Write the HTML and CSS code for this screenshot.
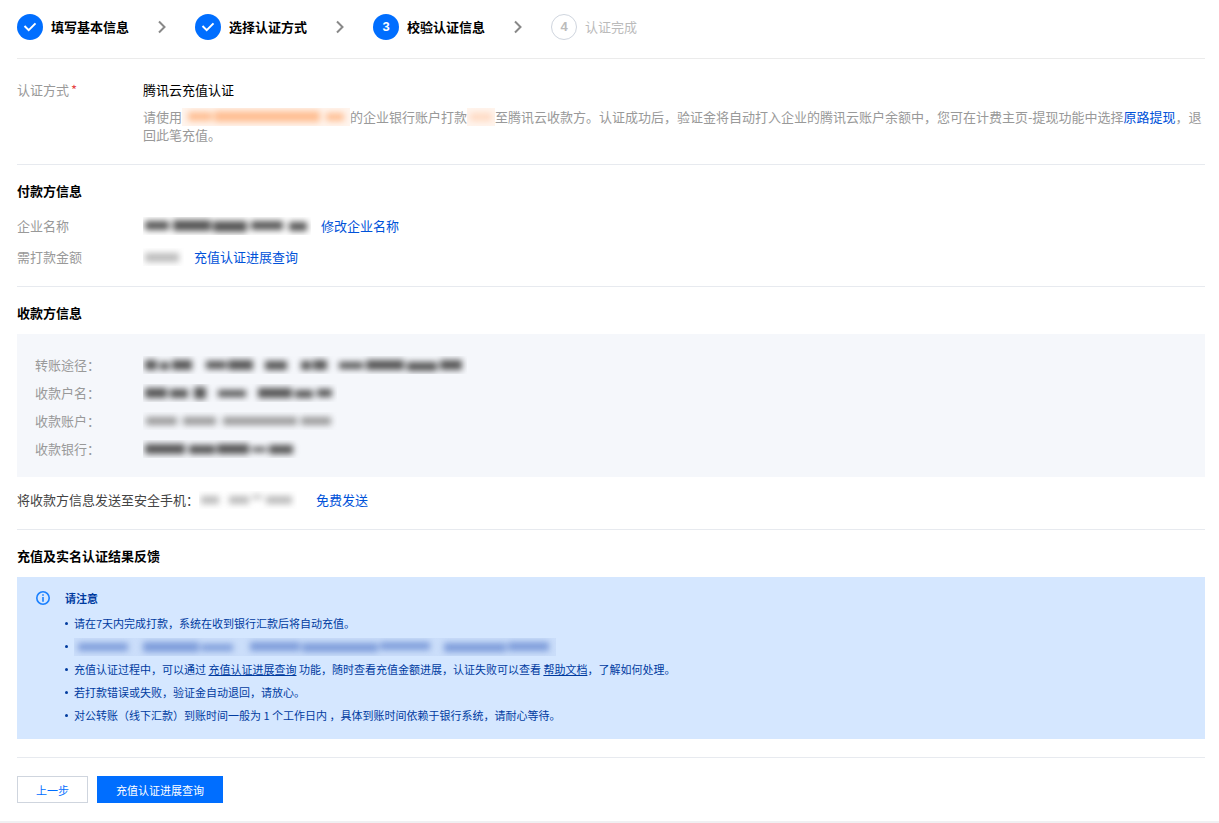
FILE: index.html
```html
<!DOCTYPE html>
<html lang="zh-CN">

<head>
    <meta charset="UTF-8">
    <meta name="viewport" content="width=device-width, initial-scale=1.0">
    <title>校验认证信息</title>
    <link rel="stylesheet" href="styles.css">
</head>

<body>
    <main class="page">
        <!-- 步骤条 -->
        <ol class="steps">
            <li class="step done">
                <span class="step-icon"><svg width="26" height="26" viewBox="0 0 26 26"><path d="M7.5 12l4.2 4.2 6.8-6.8" /></svg></span>
                <span>填写基本信息</span>
            </li>
            <li class="step-arrow"><svg width="8" height="14" viewBox="0 0 8 14"><path d="M1 1.5L6.5 7 1 12.500" /></svg></li>
            <li class="step done">
                <span class="step-icon"><svg width="26" height="26" viewBox="0 0 26 26"><path d="M7.5 12l4.2 4.2 6.8-6.8" /></svg></span>
                <span>选择认证方式</span>
            </li>
            <li class="step-arrow"><svg width="8" height="14" viewBox="0 0 8 14"><path d="M1 1.5L6.5 7 1 12.500" /></svg></li>
            <li class="step current">
                <span class="step-icon">3</span>
                <span>校验认证信息</span>
            </li>
            <li class="step-arrow"><svg width="8" height="14" viewBox="0 0 8 14"><path d="M1 1.5L6.5 7 1 12.500" /></svg></li>
            <li class="step">
                <span class="step-icon">4</span>
                <span>认证完成</span>
            </li>
        </ol>

        <!-- 认证方式 -->
        <section class="section section-method">
            <div class="row">
                <span class="label">认证方式<span class="required">*</span></span>
                <div class="value">
                    <p class="method">腾讯云充值认证</p>
                    <p class="desc">请使用<svg class="mask mask-orange" width="168" height="18"><g><rect x="6" y="4" width="24" height="9" /><rect x="32" y="3" width="106" height="11" /><rect x="144" y="5" width="18" height="8" /></g></svg>的企业银行账户打款<svg class="mask mask-orange light" width="28" height="18"><g><rect x="3" y="5" width="22" height="8" /></g></svg>至腾讯云收款方。认证成功后，验证金将自动打入企业的腾讯云账户余额中，您可在计费主页-提现功能中选择<a href="#">原路提现</a>，退回此笔充值。</p>
                </div>
            </div>
        </section>

        <!-- 付款方 -->
        <section class="section">
            <h2 class="title">付款方信息</h2>
            <div class="rows">
                <div class="row">
                    <span class="label">企业名称</span>
                    <svg class="mask" width="168" height="18"><g><rect x="2" y="4" width="24" height="9" /><rect x="30" y="3" width="38" height="11" /><rect x="70" y="4" width="34" height="11" /><rect x="108" y="4" width="32" height="9" /><rect x="146" y="5" width="18" height="9" /></g></svg>
                    <a class="row-link" href="#">修改企业名称</a>
                </div>
                <div class="row">
                    <span class="label">需打款金额</span>
                    <svg class="mask light" width="41" height="18"><g><rect x="2" y="5" width="34" height="9" /></g></svg>
                    <a class="row-link" href="#">充值认证进展查询</a>
                </div>
            </div>
        </section>

        <!-- 收款方 -->
        <section class="section">
            <h2 class="title">收款方信息</h2>
            <div class="account">
                <div class="account-row">
                    <span class="label">转账途径：</span>
                    <svg class="mask" width="324" height="18"><g><rect x="2" y="4" width="12" height="10" /><rect x="17" y="6" width="9" height="8" /><rect x="29" y="4" width="20" height="10" /><rect x="63" y="5" width="20" height="8" /><rect x="85" y="4" width="25" height="10" /><rect x="122" y="5" width="22" height="9" /><rect x="158" y="5" width="10" height="9" /><rect x="170" y="4" width="14" height="10" /><rect x="196" y="6" width="24" height="7" /><rect x="223" y="4" width="38" height="10" /><rect x="264" y="6" width="30" height="9" /><rect x="297" y="4" width="22" height="10" /></g></svg>
                </div>
                <div class="account-row">
                    <span class="label">收款户名：</span>
                    <svg class="mask" width="194" height="18"><g><rect x="2" y="4" width="22" height="10" /><rect x="27" y="5" width="18" height="9" /><rect x="51" y="3" width="12" height="12" /><rect x="75" y="6" width="28" height="7" /><rect x="115" y="4" width="34" height="10" /><rect x="152" y="6" width="18" height="8" /><rect x="174" y="5" width="15" height="8" /></g></svg>
                </div>
                <div class="account-row">
                    <span class="label">收款账户：</span>
                    <svg class="mask soft" width="194" height="18"><g><rect x="3" y="5" width="31" height="8" /><rect x="40" y="5" width="33" height="8" /><rect x="80" y="5" width="74" height="8" /><rect x="158" y="5" width="30" height="8" /></g></svg>
                </div>
                <div class="account-row">
                    <span class="label">收款银行：</span>
                    <svg class="mask" width="158" height="18"><g><rect x="2" y="4" width="40" height="10" /><rect x="46" y="5" width="26" height="9" /><rect x="74" y="4" width="32" height="10" /><rect x="109" y="7" width="14" height="5" /><rect x="126" y="5" width="24" height="9" /></g></svg>
                </div>
            </div>
            <div class="phone">
                <span>将收款方信息发送至安全手机：</span>
                <svg class="mask light" width="98" height="18"><g><rect x="2" y="5" width="18" height="8" /><rect x="30" y="5" width="20" height="8" /><rect x="53" y="4" width="10" height="4" /><rect x="67" y="5" width="26" height="8" /></g></svg>
                <a class="send" href="#">免费发送</a>
            </div>
        </section>

        <!-- 结果反馈 -->
        <section class="section section-result">
            <h2 class="title">充值及实名认证结果反馈</h2>
            <div class="notice">
                <svg class="notice-icon" width="14" height="14" viewBox="0 0 14 14"><circle cx="7" cy="7" r="6.200" /><path d="M7 3.300v1.500M7 6v4.700" /></svg>
                <div>
                    <h3 class="notice-title">请注意</h3>
                    <ul class="notice-list">
                        <li>请在7天内完成打款，系统在收到银行汇款后将自动充值。</li>
                        <li><svg class="mask mask-blue" width="482" height="18"><g><rect x="4" y="5" width="50" height="8" /><rect x="69" y="4" width="56" height="10" /><rect x="127" y="6" width="32" height="7" /><rect x="176" y="4" width="50" height="9" /><rect x="228" y="5" width="76" height="9" /><rect x="306" y="4" width="50" height="8" /><rect x="370" y="5" width="62" height="9" /><rect x="434" y="4" width="41" height="9" /></g></svg></li>
                        <li>充值认证过程中，可以通过 <a href="#">充值认证进展查询</a> 功能，随时查看充值金额进展，认证失败可以查看 <a href="#">帮助文档</a>，了解如何处理。</li>
                        <li>若打款错误或失败，验证金自动退回，请放心。</li>
                        <li>对公转账（线下汇款）到账时间一般为 1 个工作日内 ，具体到账时间依赖于银行系统，请耐心等待。</li>
                    </ul>
                </div>
            </div>
        </section>

        <div class="actions">
            <button type="button" class="btn">上一步</button>
            <button type="button" class="btn btn-primary">充值认证进展查询</button>
        </div>
    </main>
</body>

</html>
```
FILE: styles.css
```css
* {
    box-sizing: border-box;
    margin: 0;
    padding: 0;
}

body {
    background: #fff;
    color: #000;
    font: 13px/18px "Noto Sans CJK SC", sans-serif;
}

a {
    color: #0052d9;
    text-decoration: none;
}

svg {
    display: block;
    fill: none;
}

.page {
    padding: 0 14px 18px 17px;
    border-bottom: 2px solid #f0f0f2;
}

/* 步骤条 */
.steps {
    display: flex;
    align-items: center;
    gap: 29px;
    padding: 14px 0 18px;
    border-bottom: 1px solid #ebebeb;
    list-style: none;
}

.step {
    display: flex;
    align-items: center;
    gap: 8px;
    color: #bbb;
}

.step-icon {
    width: 26px;
    height: 26px;
    border: 1px solid #cfd5de;
    border-radius: 50%;
    line-height: 24px;
    text-align: center;
    font-family: "Liberation Sans", sans-serif;
    font-weight: bold;
}

.step.done,
.step.current {
    color: #000;
    font-weight: bold;
}

.step.done .step-icon,
.step.current .step-icon {
    border: 0;
    background: #006eff;
    color: #fff;
    line-height: 26px;
}

.step-icon path {
    stroke: #fff;
    stroke-width: 2;
}

.step-arrow path {
    stroke: #888;
    stroke-width: 2;
}

/* 内容区块 */
.section {
    padding: 17px 0 20px;
    border-bottom: 1px solid #e7eaef;
}

.section-method {
    padding-top: 22px;
}

.section-result {
    padding-bottom: 18px;
}

.title {
    font-size: 13px;
    font-weight: bold;
}

.rows {
    display: grid;
    gap: 13px;
    margin-top: 17px;
}

.row {
    display: flex;
}

.label {
    flex: none;
    width: 126px;
    color: #999;
}

.required {
    margin-left: 2px;
    color: #e54545;
}

.value {
    flex: 1;
}

.desc {
    margin-top: 9px;
    color: #999;
}

.row-link {
    margin-left: 10px;
}

/* 打码区域 */
.mask {
    flex: none;
    overflow: hidden;
    fill: #555;
}

.mask g {
    filter: blur(3px);
}

.mask.soft {
    fill: #999;
}

.mask.light {
    fill: #bbb;
}

.desc .mask {
    display: inline-block;
    vertical-align: top;
    background: #fff5ee;
    fill: #ffbe92;
}

.desc .mask.light {
    fill: #ffd9c2;
}

.mask-blue {
    background: #cbdefa;
    fill: #7d9cda;
}

/* 收款账户 */
.account {
    margin-top: 12px;
    padding: 17px 18px 14px;
    background: #f5f7fb;
}

.account-row {
    display: flex;
    align-items: center;
    line-height: 28px;
}

.account .label {
    width: 108px;
}

.phone {
    display: flex;
    margin-top: 14px;
    color: #444;
}

.send {
    margin-left: 19px;
}

/* 提示 */
.notice {
    display: flex;
    gap: 15px;
    margin-top: 12px;
    padding: 12px 19px;
    background: #d5e7ff;
    color: #003b9f;
    font-size: 11px;
}

.notice-icon {
    flex: none;
    margin-top: 2px;
    stroke: #1a80ff;
    stroke-width: 1.6;
}

.notice-title {
    font-size: 11px;
    font-weight: bold;
}

.notice-list {
    margin-top: 5px;
    list-style: none;
    line-height: 23px;
}

.notice-list li {
    display: flex;
    align-items: center;
    min-height: 23px;
    white-space: pre-wrap;
}

.notice-list li::before {
    content: "";
    flex: none;
    width: 3px;
    height: 3px;
    margin-right: 6px;
    border-radius: 50%;
    background: #003b9f;
}

.notice-list a {
    color: inherit;
    text-decoration: underline;
}

/* 底部按钮 */
.actions {
    display: flex;
    gap: 9px;
    margin-top: 18px;
}

.btn {
    height: 27px;
    padding: 0 18px;
    border: 1px solid #cfd5de;
    background: #fff;
    color: #006eff;
    font: 11px/18px "Noto Sans CJK SC", sans-serif;
    cursor: pointer;
}

.btn-primary {
    border-color: #006eff;
    background: #006eff;
    color: #fff;
}
```
